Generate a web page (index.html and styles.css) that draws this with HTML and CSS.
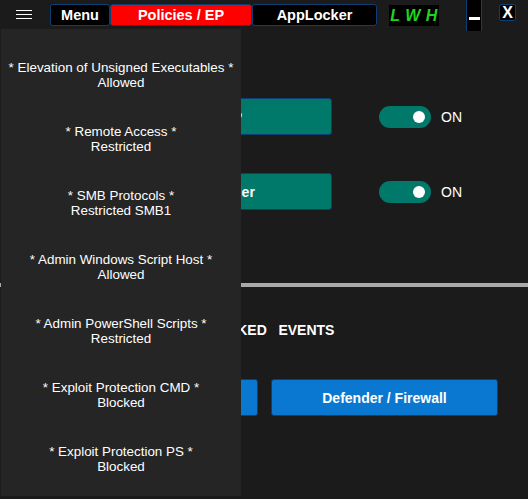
FILE: index.html
```html
<!DOCTYPE html>
<html lang="en">
<head>
<meta charset="utf-8">
<title>LWH - Policies / EP</title>
<link rel="stylesheet" href="styles.css">
</head>
<body>
<div class="app">
  <header class="topbar">
    <button class="hamburger" aria-label="Open menu">
      <svg width="16" height="10" viewBox="0 0 16 10"><path d="M0 0.5H16M0 4.5H16M0 8.5H16" stroke="#ffffff" stroke-width="1.2"/></svg>
    </button>
    <nav class="tabs">
      <button class="tab tab-menu">Menu</button>
      <button class="tab tab-policies active">Policies / EP</button>
      <button class="tab tab-applocker">AppLocker</button>
    </nav>
    <div class="brand">L W H</div>
    <button class="win-min" aria-label="Minimize"><span class="bar"></span></button>
    <button class="win-close" aria-label="Close">X</button>
  </header>

  <main class="content">
    <section class="controls">
      <div class="control-row">
        <button class="action teal">Exploit Protection / EP</button>
        <div class="toggle on"><span class="knob"></span></div>
        <span class="state">ON</span>
      </div>
      <div class="control-row">
        <button class="action teal">Enable Windows Defender</button>
        <div class="toggle on"><span class="knob"></span></div>
        <span class="state">ON</span>
      </div>
    </section>
    <div class="divider"></div>
    <h2 class="section-title">BLOCKED &nbsp; EVENTS</h2>
    <div class="event-buttons">
      <button class="action blue">Exploit Protection</button>
      <button class="action blue">Defender / Firewall</button>
    </div>
  </main>

  <aside class="drawer">
    <div class="drawer-item"><span>* Elevation of Unsigned Executables *</span><span>Allowed</span></div>
    <div class="drawer-item"><span>* Remote Access *</span><span>Restricted</span></div>
    <div class="drawer-item"><span>* SMB Protocols *</span><span>Restricted SMB1</span></div>
    <div class="drawer-item"><span>* Admin Windows Script Host *</span><span>Allowed</span></div>
    <div class="drawer-item"><span>* Admin PowerShell Scripts *</span><span>Restricted</span></div>
    <div class="drawer-item"><span>* Exploit Protection CMD *</span><span>Blocked</span></div>
    <div class="drawer-item"><span>* Exploit Protection PS *</span><span>Blocked</span></div>
  </aside>
</div>
</body>
</html>
```

FILE: styles.css
```css
* { box-sizing: border-box; }

html, body {
  margin: 0;
  padding: 0;
  background: #1b1b1b;
  color: #ffffff;
  font-family: "Liberation Sans", Arial, sans-serif;
  overflow: hidden;
}

button {
  font-family: inherit;
  color: #ffffff;
  padding: 0;
  cursor: pointer;
}

.app {
  position: relative;
  width: 528px;
  height: 499px;
  overflow: hidden;
}

/* ---------- top bar ---------- */
.topbar {
  display: flex;
  align-items: flex-start;
  height: 29px;
}

.hamburger {
  margin: 10px 0 0 16px;
  width: 16px;
  height: 10px;
  border: none;
  background: none;
  display: block;
}
.hamburger svg { display: block; }

.tabs {
  display: flex;
  margin: 4px 0 0 18px;
  height: 22px;
}

.tab {
  height: 22px;
  background: #000000;
  border: 1px solid #0d3f73;
  border-radius: 3px;
  font-weight: bold;
  font-size: 14.5px;
  line-height: 20px;
}
.tab-menu { width: 60px; }
.tab-policies { width: 142px; }
.tab-applocker { width: 125px; }
.tab.active { background: #ff0000; }

.brand {
  margin: 5px 0 0 12px;
  width: 50px;
  height: 21px;
  background: #000000;
  color: #1fd41f;
  font-weight: bold;
  font-style: italic;
  font-size: 16px;
  line-height: 21px;
  text-align: center;
  letter-spacing: 0.5px;
}

.win-min {
  margin-left: 27px;
  width: 16px;
  height: 31px;
  background: #000000;
  border: none;
  border-left: 1px solid #0d3f73;
  border-right: 1px solid #0d3f73;
  position: relative;
  display: flex;
  justify-content: center;
  padding-top: 17px;
}
.win-min .bar {
  display: block;
  width: 11px;
  height: 3px;
  background: #ffffff;
}

.win-close {
  margin: 4px 0 0 17px;
  width: 17px;
  height: 17px;
  background: #000000;
  border: 1px solid #0d3f73;
  border-radius: 2px;
  font-weight: bold;
  font-size: 16px;
  line-height: 15px;
}

/* ---------- content ---------- */
.controls {
  padding: 69px 0 0 2px;
  display: flex;
  flex-direction: column;
  gap: 38px;
}

.control-row {
  display: flex;
  align-items: center;
  height: 37px;
}

.action {
  height: 37px;
  border: 1px solid #0d3f73;
  border-radius: 3px;
  font-weight: bold;
  font-size: 14px;
}

.teal {
  width: 330px;
  background: #00786a;
}

.toggle {
  margin-left: 47px;
  width: 52px;
  height: 22px;
  border-radius: 11px;
  background: #00786a;
  position: relative;
}
.toggle .knob {
  position: absolute;
  right: 6px;
  top: 5px;
  width: 12px;
  height: 12px;
  border-radius: 50%;
  background: #ffffff;
}

.state {
  margin-left: 10px;
  font-size: 14px;
}

.divider {
  margin-top: 73px;
  height: 4px;
  background: #a9a9a9;
}

.section-title {
  margin: 35px 0 0 0;
  font-size: 14px;
  font-weight: bold;
  line-height: 16px;
  text-align: center;
  padding-left: 4px;
}

.event-buttons {
  margin-top: 41px;
  display: flex;
  justify-content: center;
  gap: 13px;
  padding-left: 1px;
}

.blue {
  width: 227px;
  background: #0a78d0;
}

/* ---------- drawer overlay ---------- */
.drawer {
  position: absolute;
  top: 29px;
  left: 1px;
  width: 240px;
  height: 467px;
  background: #252525;
  padding-top: 14px;
  display: flex;
  flex-direction: column;
}

.drawer-item {
  height: 64px;
  display: flex;
  flex-direction: column;
  align-items: center;
  justify-content: center;
  text-align: center;
  font-size: 13.4px;
  line-height: 15px;
  color: #ffffff;
}
```
